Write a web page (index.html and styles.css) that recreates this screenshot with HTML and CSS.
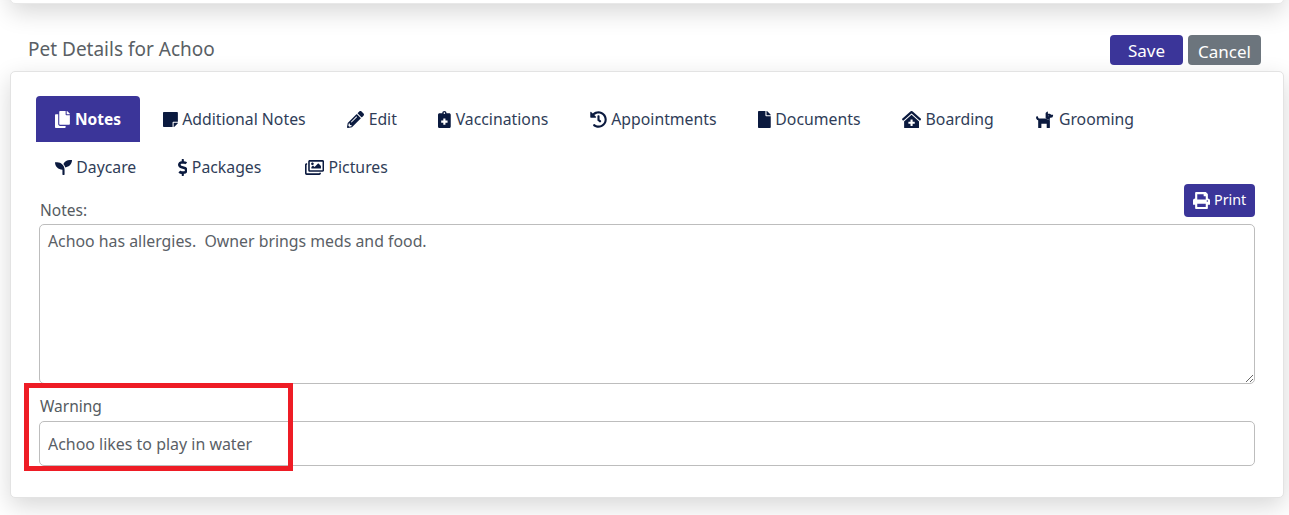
FILE: index.html
```html
<!DOCTYPE html>
<html lang="en">
<head>
<meta charset="utf-8">
<title>Pet Details for Achoo</title>
<link rel="stylesheet" href="styles.css">
</head>
<body>
<div class="top-card"></div>
<header class="page-head">
  <h2 class="page-title">Pet Details for Achoo</h2>
  <div class="head-actions">
    <button class="btn btn-primary">Save</button>
    <button class="btn btn-muted">Cancel</button>
  </div>
</header>
<main class="card">
  <nav class="tabs">
    <a class="tab active"><svg class="ico" viewBox="0 0 448 512"><path d="M320 448v40c0 13.255-10.745 24-24 24H24c-13.255 0-24-10.745-24-24V120c0-13.255 10.745-24 24-24h72v296c0 30.879 25.121 56 56 56h168zm0-344V0H152c-13.255 0-24 10.745-24 24v368c0 13.255 10.745 24 24 24h272c13.255 0 24-10.745 24-24V128H344c-13.2 0-24-10.8-24-24zm120.971-31.029L375.029 7.029A24 24 0 0 0 358.059 0H352v96h96v-6.059a24 24 0 0 0-7.029-16.97z"/></svg>Notes</a>
    <a class="tab"><svg class="ico" viewBox="0 0 448 512"><path d="M312 320h136V56c0-13.3-10.7-24-24-24H24C10.7 32 0 42.7 0 56v400c0 13.3 10.7 24 24 24h264V344c0-13.2 10.8-24 24-24zm129 55l-98 98c-4.5 4.5-10.6 7-17 7h-6V352h128v6.1c0 6.3-2.5 12.4-7 16.9z"/></svg>Additional Notes</a>
    <a class="tab"><svg class="ico" viewBox="0 0 512 512"><path d="M497.9 142.1l-46.1 46.1c-4.7 4.7-12.3 4.7-17 0l-111-111c-4.7-4.7-4.7-12.3 0-17l46.1-46.1c18.7-18.7 49.1-18.7 67.9 0l60.1 60.1c18.8 18.7 18.8 49.1 0 67.9zM284.2 99.8L21.6 362.4.4 483.9c-2.9 16.4 11.4 30.6 27.8 27.8l121.5-21.3 262.6-262.6c4.7-4.7 4.7-12.3 0-17l-111-111c-4.8-4.7-12.4-4.7-17.1 0zM124.1 339.9c-5.5-5.5-5.5-14.3 0-19.8l154-154c5.5-5.5 14.3-5.5 19.8 0s5.5 14.3 0 19.8l-154 154c-5.5 5.5-14.3 5.5-19.8 0zM88 424h48v36.3l-64.5 11.3-31.1-31.1L51.7 376H88v48z"/></svg>Edit</a>
    <a class="tab"><svg class="ico" viewBox="0 0 384 512"><path d="M336 64H256c0-35.3-28.7-64-64-64s-64 28.7-64 64H48C21.5 64 0 85.5 0 112v352c0 26.5 21.5 48 48 48h288c26.5 0 48-21.5 48-48V112c0-26.5-21.5-48-48-48zM192 40c13.3 0 24 10.7 24 24s-10.7 24-24 24-24-10.7-24-24 10.7-24 24-24zm96 304c0 4.4-3.6 8-8 8h-56v56c0 4.4-3.6 8-8 8h-48c-4.4 0-8-3.6-8-8v-56h-56c-4.4 0-8-3.6-8-8v-48c0-4.4 3.6-8 8-8h56v-56c0-4.4 3.6-8 8-8h48c4.4 0 8 3.6 8 8v56h56c4.4 0 8 3.6 8 8v48z"/></svg>Vaccinations</a>
    <a class="tab"><svg class="ico" viewBox="0 0 512 512"><path d="M504 255.531c.253 136.64-111.18 248.372-247.82 248.468-59.015.042-113.223-20.53-155.822-54.911-11.077-8.94-11.905-25.541-1.839-35.607l11.267-11.267c8.609-8.609 22.353-9.551 31.891-1.984C173.062 425.135 212.781 440 256 440c101.705 0 184-82.311 184-184 0-101.705-82.311-184-184-184-48.814 0-93.149 18.969-126.068 49.932l50.754 50.754c10.08 10.08 2.941 27.314-11.313 27.314H24c-8.837 0-16-7.163-16-16V38.627c0-14.254 17.234-21.393 27.314-11.314l49.372 49.372C129.209 34.136 189.552 8 256 8c136.81 0 247.747 110.78 248 247.531zm-180.912 78.784l9.823-12.63c8.138-10.463 6.253-25.542-4.21-33.679L288 256.349V152c0-13.255-10.745-24-24-24h-16c-13.255 0-24 10.745-24 24v135.651l65.409 50.874c10.463 8.137 25.541 6.253 33.679-4.21z"/></svg>Appointments</a>
    <a class="tab"><svg class="ico" viewBox="0 0 384 512"><path d="M224 136V0H24C10.7 0 0 10.7 0 24v464c0 13.3 10.7 24 24 24h336c13.3 0 24-10.7 24-24V160H248c-13.2 0-24-10.8-24-24zm160-14.1v6.1H256V0h6.1c6.4 0 12.5 2.5 17 7l97.9 98c4.5 4.5 7 10.6 7 16.9z"/></svg>Documents</a>
    <a class="tab"><svg class="ico" viewBox="0 0 576 512"><path d="M288 115L69.47 307.71c-1.62 1.46-3.69 2.14-5.47 3.35V496a16 16 0 0 0 16 16h416a16 16 0 0 0 16-16V311.1c-1.7-1.16-3.72-1.82-5.26-3.2zm96 261a8 8 0 0 1-8 8h-56v56a8 8 0 0 1-8 8h-48a8 8 0 0 1-8-8v-56h-56a8 8 0 0 1-8-8v-48a8 8 0 0 1 8-8h56v-56a8 8 0 0 1 8-8h48a8 8 0 0 1 8 8v56h56a8 8 0 0 1 8 8zm186.69-139.72l-255.94-226a39.85 39.85 0 0 0-53.45 0l-256 226a16 16 0 0 0-1.21 22.6L25.5 282.7a16 16 0 0 0 22.6 1.21L277.42 81.63a16 16 0 0 1 21.17 0L527.91 283.9a16 16 0 0 0 22.6-1.21l21.4-23.82a16 16 0 0 0-1.22-22.59z"/></svg>Boarding</a>
    <a class="tab"><svg class="ico" viewBox="0 0 576 512"><path fill-rule="evenodd" d="M298.06 224 448 277.55V496a16 16 0 0 1-16 16h-64a16 16 0 0 1-16-16V384H192v112a16 16 0 0 1-16 16h-64a16 16 0 0 1-16-16V282.09C58.84 268.84 32 233.66 32 192a32 32 0 0 1 64 0 32.06 32.06 0 0 0 32 32zM544 112h-64l-7.16-14.31A32 32 0 0 0 444.22 80H388V32c0-14-17-21-27-11l-41 41v162l128 46v-66h32a64 64 0 0 0 64-64v-28zM412 144a12 12 0 1 1-24 0 12 12 0 0 1 24 0z"/></svg>Grooming</a>
    <a class="tab"><svg class="ico" viewBox="0 0 512 512"><path d="M64 96H0c0 123.7 100.3 224 224 224v144c0 8.8 7.2 16 16 16h32c8.8 0 16-7.2 16-16V320C288 196.3 187.7 96 64 96zm384-64c-84.2 0-157.4 46.5-195.7 115.2 27.7 30.2 48.2 66.9 59 107.6C424 243.1 512 147.9 512 32h-64z"/></svg>Daycare</a>
    <a class="tab"><svg class="ico" viewBox="0 0 288 512"><path d="M209.2 233.4l-108-31.6C88.7 198.2 80 186.5 80 173.5c0-16.3 13.2-29.5 29.5-29.5h66.3c12.2 0 24.2 3.7 34.2 10.5 6.1 4.1 14.3 3.1 19.5-2l34.8-34c7.1-6.9 6.1-18.4-1.8-24.5C238 74.8 207.4 64.1 176 64V16c0-8.8-7.2-16-16-16h-32c-8.8 0-16 7.2-16 16v48h-2.5C45.8 64-5.4 118.7.5 183.6c4.2 46.1 39.4 83.6 83.8 96.6l102.5 30c12.5 3.7 21.2 15.3 21.2 28.3 0 16.3-13.2 29.5-29.5 29.5h-66.3C100 368 88 364.3 78 357.5c-6.1-4.1-14.3-3.1-19.5 2l-34.8 34c-7.1 6.9-6.1 18.4 1.8 24.5 24.5 19.2 55.1 29.9 86.5 30v48c0 8.8 7.2 16 16 16h32c8.8 0 16-7.2 16-16v-48.2c46.6-.9 90.3-28.6 105.7-72.7 21.5-61.6-14.6-124.8-72.5-141.7z"/></svg>Packages</a>
    <a class="tab tab-wide"><svg class="ico" viewBox="0 0 576 512"><path d="M480 416v16c0 26.51-21.49 48-48 48H48c-26.51 0-48-21.49-48-48V176c0-26.51 21.49-48 48-48h16v48H54a6 6 0 0 0-6 6v244a6 6 0 0 0 6 6h372a6 6 0 0 0 6-6v-10h48zm42-336H150a6 6 0 0 0-6 6v244a6 6 0 0 0 6 6h372a6 6 0 0 0 6-6V86a6 6 0 0 0-6-6zm6-48c26.51 0 48 21.49 48 48v256c0 26.51-21.49 48-48 48H144c-26.51 0-48-21.49-48-48V80c0-26.51 21.49-48 48-48h384zM264 144c0 22.091-17.909 40-40 40s-40-17.909-40-40 17.909-40 40-40 40 17.909 40 40zm-72 96l39.515-39.515c4.686-4.686 12.284-4.686 16.971 0L288 240l103.515-103.515c4.686-4.686 12.284-4.686 16.971 0L480 208v80H192v-48z"/></svg>Pictures</a>
  </nav>
  <section class="fields">
    <div class="notes-head">
      <label class="field-label" for="notes">Notes:</label>
      <button class="btn-print"><svg class="ico ico-print" viewBox="0 0 512 512"><path d="M448 192V77.25c0-8.49-3.37-16.62-9.37-22.63L393.37 9.37c-6-6-14.14-9.37-22.63-9.37H96C78.33 0 64 14.33 64 32v160c-35.35 0-64 28.65-64 64v112c0 8.84 7.16 16 16 16h48v96c0 17.67 14.33 32 32 32h320c17.67 0 32-14.33 32-32v-96h48c8.84 0 16-7.16 16-16V256c0-35.35-28.65-64-64-64zm-64 256H128v-96h256v96zm0-224H128V64h192v48c0 8.84 7.16 16 16 16h48v96zm48 72c-13.25 0-24-10.75-24-24 0-13.26 10.75-24 24-24s24 10.74 24 24c0 13.25-10.75 24-24 24z"/></svg>Print</button>
    </div>
    <textarea id="notes" class="control notes-area">Achoo has allergies.  Owner brings meds and food.</textarea>
    <div class="warning">
      <label class="field-label warning-label" for="warn">Warning</label>
      <input id="warn" class="control warning-input" value="Achoo likes to play in water">
      <div class="highlight"></div>
    </div>
  </section>
</main>
</body>
</html>
```
FILE: styles.css
```css
* { box-sizing: border-box; }
html, body { margin: 0; padding: 0; }
body {
  background: #fff;
  font-family: "Noto Sans", "Open Sans", sans-serif;
  font-size: 16px;
  color: #495057;
  height: 515px;
  overflow: hidden;
}
.top-card {
  height: 104px;
  margin: -100px 5px 0 10px;
  background: #fff;
  border: 1px solid #e8e8e8;
  border-radius: 5px;
  box-shadow: 0 8px 24px rgba(0, 0, 0, .16);
}
.page-head {
  display: flex;
  justify-content: space-between;
  align-items: center;
  height: 30px;
  margin: 31px 28px 6px;
}
.page-title {
  margin: 0 0 2px;
  font-size: 19px;
  font-weight: 400;
  color: #5a5f65;
}
.head-actions { display: flex; gap: 5px; }
.btn {
  width: 73px;
  height: 30px;
  padding: 0;
  border: 0;
  border-radius: 4px;
  color: #fff;
  font: inherit;
  font-size: 17px;
}
.btn-primary { background: #3b3599; }
.btn-muted { background: #6c757d; padding-top: 2px; }
.card {
  margin: 0 5px 0 10px;
  height: 427px;
  padding: 24px 28px 0 25px;
  background: #fff;
  border: 1px solid #e3e3e3;
  border-radius: 5px;
  box-shadow: 0 8px 24px rgba(0, 0, 0, .16);
}
.tabs {
  display: flex;
  flex-wrap: wrap;
  gap: 2px 4px;
  margin-bottom: -6px;
}
.tab {
  display: flex;
  align-items: center;
  height: 46px;
  padding: 0 18.75px;
  color: #2f3d58;
  font-size: 15.8px;
  white-space: nowrap;
}
.tab.active {
  width: 104px;
  padding: 0 0 0 19px;
  background: #3b3599;
  color: #fff;
  font-size: 15.5px;
  font-weight: 700;
  border-radius: 4px 4px 0 0;
}
.tab-wide { margin-left: 2px; }
.ico {
  height: 17px;
  width: auto;
  margin-right: 4.5px;
  fill: #0b1a3f;
  flex: none;
}
.tab.active .ico { fill: #fff; margin-right: 5px; }
.fields { padding-left: 3px; }
.notes-head {
  display: flex;
  justify-content: space-between;
  align-items: flex-start;
  height: 40px;
  position: relative;
}
.field-label {
  display: block;
  margin-top: 14px;
  padding-left: 1px;
  line-height: 24px;
  font-size: 15.5px;
  color: #555b61;
}
.btn-print {
  display: flex;
  align-items: center;
  height: 33px;
  width: 71px;
  padding: 0 0 2px 9px;
  border: 0;
  border-radius: 4px;
  background: #3b3599;
  color: #fff;
  font: inherit;
  font-size: 14.3px;
}
.ico-print { fill: #fff; margin: 2px 4px 0 0; }
.control {
  display: block;
  width: 100%;
  border: 1px solid #bdbdbd;
  border-radius: 5px;
  background: #fff;
  color: #5a6066;
  font: inherit;
  font-size: 15.85px;
  padding: 5px 8px;
  outline: 0;
}
.notes-area { height: 160px; margin: 0; }
.warning { position: relative; padding-top: 10px; }
.warning-label { margin-top: 0; margin-bottom: 3px; }
.warning-input { height: 45px; font-size: 15.95px; }
.highlight {
  position: absolute;
  left: -15px;
  top: -1px;
  width: 269px;
  height: 88px;
  border: 5px solid #ee1c25;
  pointer-events: none;
}
```
